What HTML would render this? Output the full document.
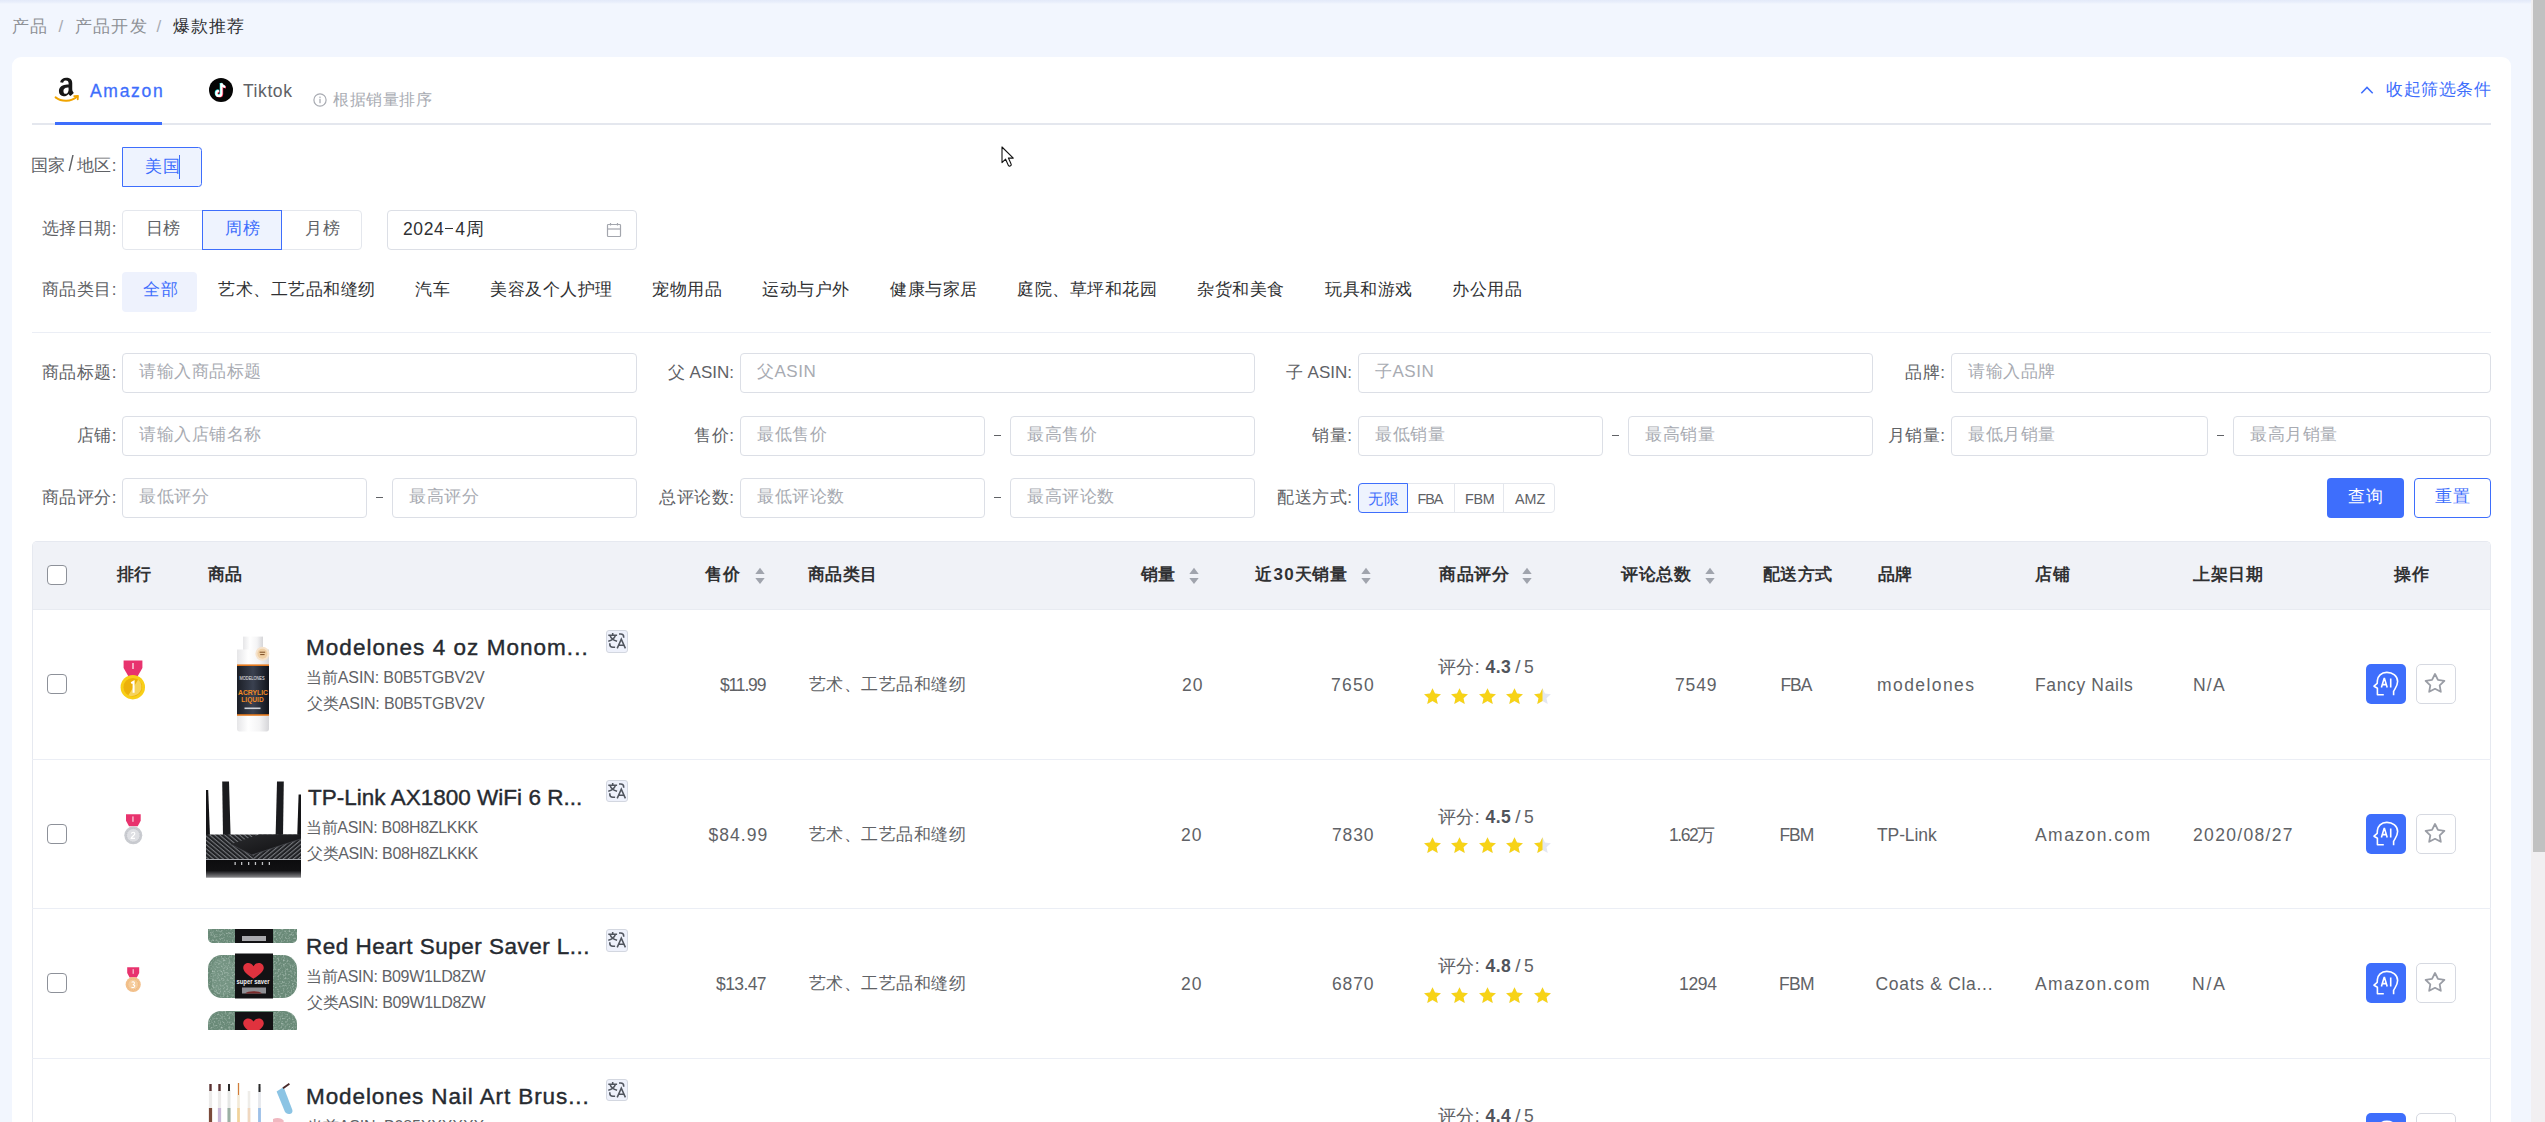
<!DOCTYPE html>
<html><head><meta charset="utf-8"><title>爆款推荐</title>
<style>
html,body{margin:0;padding:0;}
body{width:2545px;height:1122px;overflow:hidden;position:relative;background:#f2f6fe;font-family:"Liberation Sans",sans-serif;}
.t{position:absolute;white-space:nowrap;}
.b{position:absolute;box-sizing:border-box;}
svg{position:absolute;overflow:visible;}
</style></head><body>

<div class="b" style="left:0px;top:0px;width:2531px;height:4px;background:linear-gradient(rgba(40,80,190,0.075),rgba(40,80,190,0.045) 55%,rgba(40,80,190,0));"></div>
<div class="t" style="left:12px;top:12.30px;font-size:17px;line-height:30px;color:#8e9196;letter-spacing:1.200px;">产品</div>
<div class="t" style="left:58.5px;top:12.30px;font-size:17px;line-height:30px;color:#a8abb2;letter-spacing:0.500px;">/</div>
<div class="t" style="left:75px;top:12.30px;font-size:17px;line-height:30px;color:#8e9196;letter-spacing:1.200px;">产品开发</div>
<div class="t" style="left:156.5px;top:12.30px;font-size:17px;line-height:30px;color:#a8abb2;letter-spacing:0.500px;">/</div>
<div class="t" style="left:172.5px;top:12.30px;font-size:17px;line-height:30px;color:#303133;letter-spacing:1.000px;">爆款推荐</div>
<div class="b" style="left:12px;top:57px;width:2499px;height:1143px;background:#fff;border-radius:9px;"></div>
<div class="b" style="left:32px;top:123px;width:2459px;height:2px;background:#e4e7ee;"></div>
<div class="b" style="left:55px;top:122px;width:107px;height:3px;background:#3e6efc;"></div>
<svg style="left:55px;top:77px" width="25" height="27" viewBox="0 0 25 27">
<path transform="matrix(1.17 0 0 1.25 -1.95 -3.2)" d="M11.2 3.2c-2.6 0-4.6 1.2-5.2 3.6l2.6.3c.3-1.2 1.2-1.7 2.4-1.7 1.6 0 2.3.9 2.3 2.3v.8c-1.6 0-3.6.1-5.1.8C6.5 10 5 11.4 5 13.8c0 2.7 1.8 4.1 4 4.1 1.9 0 3.1-.5 4.3-1.8.4.6.6.9 1.3 1.5.2.1.4.1.6 0l2.3-2c.2-.2.2-.4 0-.6-.6-.8-1.1-1.4-1.1-2.8V7.6c0-2.2-.9-4.4-5.2-4.4zm2.1 8.6c0 1.1 0 2-.6 2.9-.4.8-1.2 1.3-2 1.3-1.1 0-1.8-.9-1.8-2.1 0-2.4 2.2-2.9 4.3-2.9v.8z" fill="#161616"/>
<path d="M0.6 20.4c6 4.6 15.4 4.6 21.4-0.6" stroke="#f0a400" stroke-width="2" fill="none" stroke-linecap="round"/>
<path d="M19.2 19.2l3.8-.4-.3 3.6" stroke="#f0a400" stroke-width="1.8" fill="none" stroke-linecap="round" stroke-linejoin="round"/>
</svg>
<div class="t" style="left:90.0px;top:76.00px;font-size:17.5px;line-height:30px;color:#3e6efc;letter-spacing:1.700px;-webkit-text-stroke:0.3px #3e6efc;">Amazon</div>
<svg style="left:209px;top:78px" width="24" height="24" viewBox="0 0 24 24">
<circle cx="12" cy="12" r="12" fill="#050505"/>
<g transform="translate(0.7,0.6)"><path d="M12.4 5.4v10a2.5 2.5 0 1 1-2.5-2.5" stroke="#ff2d55" stroke-width="2.2" fill="none"/><path d="M12.4 5.5c.4 2 1.8 3.2 3.9 3.3" stroke="#ff2d55" stroke-width="2.2" fill="none"/></g>
<g transform="translate(-0.6,-0.5)"><path d="M12.4 5.4v10a2.5 2.5 0 1 1-2.5-2.5" stroke="#25f4ee" stroke-width="2.2" fill="none"/><path d="M12.4 5.5c.4 2 1.8 3.2 3.9 3.3" stroke="#25f4ee" stroke-width="2.2" fill="none"/></g>
<path d="M12.4 5.4v10a2.5 2.5 0 1 1-2.5-2.5" stroke="#fff" stroke-width="2.2" fill="none"/><path d="M12.4 5.5c.4 2 1.8 3.2 3.9 3.3" stroke="#fff" stroke-width="2.2" fill="none"/>
</svg>
<div class="t" style="left:243.0px;top:76.00px;font-size:17.5px;line-height:30px;color:#606266;letter-spacing:0.580px;">Tiktok</div>
<svg style="left:313px;top:93px" width="14" height="14" viewBox="0 0 14 14">
<circle cx="7" cy="7" r="6.1" stroke="#a8abb2" stroke-width="1.2" fill="none"/>
<rect x="6.35" y="5.8" width="1.3" height="4.4" fill="#a8abb2"/><rect x="6.35" y="3.6" width="1.3" height="1.3" fill="#a8abb2"/>
</svg>
<div class="t" style="left:333px;top:85.00px;font-size:16px;line-height:30px;color:#a8abb2;letter-spacing:0.500px;">根据销量排序</div>
<svg style="left:2360px;top:85px" width="14" height="10" viewBox="0 0 14 10">
<path d="M1.3 8.3L7 2.4l5.7 5.9" stroke="#3e6efc" stroke-width="1.5" fill="none"/></svg>
<div class="t" style="left:2386px;top:74.50px;font-size:17px;line-height:30px;color:#3e6efc;letter-spacing:0.500px;">收起筛选条件</div>
<div class="t" style="right:2428.0px;top:151.30px;font-size:17px;line-height:30px;color:#606266;letter-spacing:0.500px;">国家<span style="font-size:22px;line-height:10px;margin:0 2.5px 0 2px;display:inline-block;transform:scaleX(0.85)">/</span>地区:</div>
<div class="b" style="left:122px;top:147px;width:80px;height:40px;border:1px solid #3e6efc;background:#eef3fe;border-radius:0 3.5px 3.5px 0;"></div>
<div class="t" style="left:145px;top:151.50px;font-size:17px;line-height:30px;color:#3e6efc;letter-spacing:0.500px;">美国</div>
<div class="b" style="left:179px;top:155px;width:1.1999999999999886px;height:24px;background:#3e6efc;"></div>
<div class="t" style="right:2428.0px;top:214.00px;font-size:17px;line-height:30px;color:#606266;letter-spacing:0.500px;">选择日期:</div>
<div class="b" style="left:122px;top:210px;width:240px;height:40px;border:1px solid #e4e7ed;border-radius:4px;background:#fff;"></div>
<div class="b" style="left:202px;top:210px;width:80px;height:40px;border:1px solid #3e6efc;background:#eef3fe;"></div>
<div class="t" style="left:145.5px;top:214.00px;font-size:17px;line-height:30px;color:#606266;letter-spacing:0.500px;">日榜</div>
<div class="t" style="left:225px;top:214.00px;font-size:17px;line-height:30px;color:#3e6efc;letter-spacing:0.500px;">周榜</div>
<div class="t" style="left:305px;top:214.00px;font-size:17px;line-height:30px;color:#606266;letter-spacing:0.500px;">月榜</div>
<div class="b" style="left:387px;top:210px;width:250px;height:40px;border:1px solid #dcdfe6;border-radius:4px;background:#fff;"></div>
<div class="t" style="left:403px;top:213.70px;font-size:17.5px;line-height:30px;color:#303133;letter-spacing:0.600px;">2024<span style="display:inline-block;width:8px;height:1px;background:#303133;vertical-align:5.5px;margin:0 2px 0 1px"></span>4周</div>
<svg style="left:606px;top:222px" width="16" height="16" viewBox="0 0 16 16">
<rect x="1.5" y="2.5" width="13" height="12" rx="0.8" stroke="#a3a6ad" stroke-width="1.2" fill="none"/>
<path d="M1.5 7h13" stroke="#a3a6ad" stroke-width="1.2"/><path d="M4.5 1v2.5M11.5 1v2.5" stroke="#a3a6ad" stroke-width="1.2"/>
</svg>
<div class="t" style="right:2428.0px;top:274.50px;font-size:17px;line-height:30px;color:#606266;letter-spacing:0.500px;">商品类目:</div>
<div class="b" style="left:122px;top:272px;width:75px;height:40px;background:#eef2fd;border-radius:4px;"></div>
<div class="t" style="left:143px;top:274.50px;font-size:17px;line-height:30px;color:#3e6efc;letter-spacing:0.500px;">全部</div>
<div class="t" style="left:218px;top:274.50px;font-size:17px;line-height:30px;color:#303133;letter-spacing:0.500px;">艺术、工艺品和缝纫</div>
<div class="t" style="left:415px;top:274.50px;font-size:17px;line-height:30px;color:#303133;letter-spacing:0.500px;">汽车</div>
<div class="t" style="left:490px;top:274.50px;font-size:17px;line-height:30px;color:#303133;letter-spacing:0.500px;">美容及个人护理</div>
<div class="t" style="left:652px;top:274.50px;font-size:17px;line-height:30px;color:#303133;letter-spacing:0.500px;">宠物用品</div>
<div class="t" style="left:762px;top:274.50px;font-size:17px;line-height:30px;color:#303133;letter-spacing:0.500px;">运动与户外</div>
<div class="t" style="left:890px;top:274.50px;font-size:17px;line-height:30px;color:#303133;letter-spacing:0.500px;">健康与家居</div>
<div class="t" style="left:1017px;top:274.50px;font-size:17px;line-height:30px;color:#303133;letter-spacing:0.500px;">庭院、草坪和花园</div>
<div class="t" style="left:1197px;top:274.50px;font-size:17px;line-height:30px;color:#303133;letter-spacing:0.500px;">杂货和美食</div>
<div class="t" style="left:1325px;top:274.50px;font-size:17px;line-height:30px;color:#303133;letter-spacing:0.500px;">玩具和游戏</div>
<div class="t" style="left:1452px;top:274.50px;font-size:17px;line-height:30px;color:#303133;letter-spacing:0.500px;">办公用品</div>
<div class="b" style="left:32px;top:332px;width:2459px;height:1px;background:#ebeef5;"></div>
<div class="t" style="right:2428.0px;top:358.30px;font-size:17px;line-height:30px;color:#606266;letter-spacing:0.500px;">商品标题:</div>
<div class="b" style="left:122px;top:353px;width:515px;height:40px;border:1px solid #dcdfe6;border-radius:4px;background:#fff;"></div>
<div class="t" style="left:139px;top:357.20px;font-size:17px;line-height:30px;color:#a8abb2;letter-spacing:0.500px;">请输入商品标题</div>
<div class="t" style="right:1811.0px;top:358.30px;font-size:17px;line-height:30px;color:#606266;">父 ASIN:</div>
<div class="b" style="left:740px;top:353px;width:515px;height:40px;border:1px solid #dcdfe6;border-radius:4px;background:#fff;"></div>
<div class="t" style="left:757px;top:357.20px;font-size:17px;line-height:30px;color:#a8abb2;letter-spacing:0.500px;">父ASIN</div>
<div class="t" style="right:1193.0px;top:358.30px;font-size:17px;line-height:30px;color:#606266;">子 ASIN:</div>
<div class="b" style="left:1358px;top:353px;width:515px;height:40px;border:1px solid #dcdfe6;border-radius:4px;background:#fff;"></div>
<div class="t" style="left:1375px;top:357.20px;font-size:17px;line-height:30px;color:#a8abb2;letter-spacing:0.500px;">子ASIN</div>
<div class="t" style="right:599.5px;top:358.30px;font-size:17px;line-height:30px;color:#606266;letter-spacing:0.500px;">品牌:</div>
<div class="b" style="left:1951px;top:353px;width:540px;height:40px;border:1px solid #dcdfe6;border-radius:4px;background:#fff;"></div>
<div class="t" style="left:1968px;top:357.20px;font-size:17px;line-height:30px;color:#a8abb2;letter-spacing:0.500px;">请输入品牌</div>
<div class="t" style="right:2428.0px;top:420.90px;font-size:17px;line-height:30px;color:#606266;letter-spacing:0.500px;">店铺:</div>
<div class="b" style="left:122px;top:416px;width:515px;height:40px;border:1px solid #dcdfe6;border-radius:4px;background:#fff;"></div>
<div class="t" style="left:139px;top:420.20px;font-size:17px;line-height:30px;color:#a8abb2;letter-spacing:0.500px;">请输入店铺名称</div>
<div class="t" style="right:1810.5px;top:420.90px;font-size:17px;line-height:30px;color:#606266;letter-spacing:0.500px;">售价:</div>
<div class="b" style="left:740px;top:416px;width:245px;height:40px;border:1px solid #dcdfe6;border-radius:4px;background:#fff;"></div>
<div class="t" style="left:757px;top:420.20px;font-size:17px;line-height:30px;color:#a8abb2;letter-spacing:0.500px;">最低售价</div>
<div class="b" style="left:993.5px;top:434.9px;width:7.0px;height:1.0px;background:#606266;"></div>
<div class="b" style="left:1010px;top:416px;width:245px;height:40px;border:1px solid #dcdfe6;border-radius:4px;background:#fff;"></div>
<div class="t" style="left:1027px;top:420.20px;font-size:17px;line-height:30px;color:#a8abb2;letter-spacing:0.500px;">最高售价</div>
<div class="t" style="right:1192.5px;top:420.90px;font-size:17px;line-height:30px;color:#606266;letter-spacing:0.500px;">销量:</div>
<div class="b" style="left:1358px;top:416px;width:245px;height:40px;border:1px solid #dcdfe6;border-radius:4px;background:#fff;"></div>
<div class="t" style="left:1375px;top:420.20px;font-size:17px;line-height:30px;color:#a8abb2;letter-spacing:0.500px;">最低销量</div>
<div class="b" style="left:1611.5px;top:434.9px;width:7.0px;height:1.0px;background:#606266;"></div>
<div class="b" style="left:1628px;top:416px;width:245px;height:40px;border:1px solid #dcdfe6;border-radius:4px;background:#fff;"></div>
<div class="t" style="left:1645px;top:420.20px;font-size:17px;line-height:30px;color:#a8abb2;letter-spacing:0.500px;">最高销量</div>
<div class="t" style="right:599.5px;top:420.90px;font-size:17px;line-height:30px;color:#606266;letter-spacing:0.500px;">月销量:</div>
<div class="b" style="left:1951px;top:416px;width:257px;height:40px;border:1px solid #dcdfe6;border-radius:4px;background:#fff;"></div>
<div class="t" style="left:1968px;top:420.20px;font-size:17px;line-height:30px;color:#a8abb2;letter-spacing:0.500px;">最低月销量</div>
<div class="b" style="left:2216.5px;top:434.9px;width:7.0px;height:1.0px;background:#606266;"></div>
<div class="b" style="left:2233px;top:416px;width:258px;height:40px;border:1px solid #dcdfe6;border-radius:4px;background:#fff;"></div>
<div class="t" style="left:2250px;top:420.20px;font-size:17px;line-height:30px;color:#a8abb2;letter-spacing:0.500px;">最高月销量</div>
<div class="t" style="right:2428.0px;top:482.50px;font-size:17px;line-height:30px;color:#606266;letter-spacing:0.500px;">商品评分:</div>
<div class="b" style="left:122px;top:478px;width:245px;height:40px;border:1px solid #dcdfe6;border-radius:4px;background:#fff;"></div>
<div class="t" style="left:139px;top:482.20px;font-size:17px;line-height:30px;color:#a8abb2;letter-spacing:0.500px;">最低评分</div>
<div class="b" style="left:375.5px;top:496.5px;width:7.0px;height:1.0px;background:#606266;"></div>
<div class="b" style="left:392px;top:478px;width:245px;height:40px;border:1px solid #dcdfe6;border-radius:4px;background:#fff;"></div>
<div class="t" style="left:409px;top:482.20px;font-size:17px;line-height:30px;color:#a8abb2;letter-spacing:0.500px;">最高评分</div>
<div class="t" style="right:1810.5px;top:482.50px;font-size:17px;line-height:30px;color:#606266;letter-spacing:0.500px;">总评论数:</div>
<div class="b" style="left:740px;top:478px;width:245px;height:40px;border:1px solid #dcdfe6;border-radius:4px;background:#fff;"></div>
<div class="t" style="left:757px;top:482.20px;font-size:17px;line-height:30px;color:#a8abb2;letter-spacing:0.500px;">最低评论数</div>
<div class="b" style="left:993.5px;top:496.5px;width:7.0px;height:1.0px;background:#606266;"></div>
<div class="b" style="left:1010px;top:478px;width:245px;height:40px;border:1px solid #dcdfe6;border-radius:4px;background:#fff;"></div>
<div class="t" style="left:1027px;top:482.20px;font-size:17px;line-height:30px;color:#a8abb2;letter-spacing:0.500px;">最高评论数</div>
<div class="t" style="right:1192.5px;top:482.50px;font-size:17px;line-height:30px;color:#606266;letter-spacing:0.500px;">配送方式:</div>
<div class="b" style="left:1358px;top:483px;width:197px;height:30px;border:1px solid #e4e7ed;border-radius:4px;background:#fff;"></div>
<div class="b" style="left:1454px;top:483px;width:1px;height:30px;background:#e4e7ed;"></div>
<div class="b" style="left:1503px;top:483px;width:1px;height:30px;background:#e4e7ed;"></div>
<div class="b" style="left:1358px;top:483px;width:50px;height:30px;border:1px solid #3e6efc;background:#eef3fe;border-radius:4px 0 0 4px;"></div>
<div class="t" style="left:1368px;top:484.00px;font-size:15px;line-height:30px;color:#3e6efc;letter-spacing:0.500px;">无限</div>
<div class="t" style="left:1417.5px;top:484.00px;font-size:14.3px;line-height:30px;color:#606266;letter-spacing:-1.000px;">FBA</div>
<div class="t" style="left:1465.0px;top:484.00px;font-size:14.3px;line-height:30px;color:#606266;letter-spacing:-0.300px;">FBM</div>
<div class="t" style="left:1515.0px;top:484.00px;font-size:14.3px;line-height:30px;color:#606266;">AMZ</div>
<div class="b" style="left:2327px;top:478px;width:77px;height:40px;background:#3e6efc;border-radius:4px;"></div>
<div class="t" style="left:2065.5px;width:600px;text-align:center;top:481.50px;font-size:17px;line-height:30px;color:#fff;letter-spacing:0.500px;">查询</div>
<div class="b" style="left:2414px;top:478px;width:77px;height:40px;border:1px solid #3e6efc;border-radius:4px;background:#fff;"></div>
<div class="t" style="left:2152.5px;width:600px;text-align:center;top:481.50px;font-size:17px;line-height:30px;color:#3e6efc;letter-spacing:0.500px;">重置</div>
<div class="b" style="left:32px;top:541px;width:2459px;height:659px;border:1px solid #e6e9f0;border-bottom:none;border-radius:5px 5px 0 0;background:#fff;"></div>
<div class="b" style="left:33px;top:542px;width:2457px;height:67px;background:#f0f2f7;border-radius:4px 4px 0 0;"></div>
<div class="b" style="left:33px;top:609px;width:2457px;height:1px;background:#e8ebf1;"></div>
<div class="b" style="left:47px;top:565px;width:20px;height:20px;border:1px solid #8d9199;border-radius:4px;background:#fff;"></div>
<div class="t" style="left:116.5px;top:559.50px;font-size:17px;line-height:30px;color:#303133;font-weight:700;letter-spacing:0.500px;">排行</div>
<div class="t" style="left:207.5px;top:559.50px;font-size:17px;line-height:30px;color:#303133;font-weight:700;letter-spacing:0.500px;">商品</div>
<div class="t" style="left:705px;top:559.50px;font-size:17px;line-height:30px;color:#303133;font-weight:700;letter-spacing:0.500px;">售价</div>
<svg style="left:754.5px;top:565.5px" width="10" height="20" viewBox="0 0 10 20">
<path d="M5 1.8L9.7 8H0.3z" fill="#a0a4ad"/><path d="M5 18L9.7 12H0.3z" fill="#a0a4ad"/></svg>
<div class="t" style="left:807.5px;top:559.50px;font-size:17px;line-height:30px;color:#303133;font-weight:700;letter-spacing:0.500px;">商品类目</div>
<div class="t" style="left:1140.5px;top:559.50px;font-size:17px;line-height:30px;color:#303133;font-weight:700;letter-spacing:0.500px;">销量</div>
<svg style="left:1188.5px;top:565.5px" width="10" height="20" viewBox="0 0 10 20">
<path d="M5 1.8L9.7 8H0.3z" fill="#a0a4ad"/><path d="M5 18L9.7 12H0.3z" fill="#a0a4ad"/></svg>
<div class="t" style="left:1255px;top:560.00px;font-size:17px;line-height:30px;color:#303133;font-weight:700;letter-spacing:0.500px;">近<span style="letter-spacing:1.2px;margin-left:1px">30</span>天销量</div>
<svg style="left:1361px;top:565.5px" width="10" height="20" viewBox="0 0 10 20">
<path d="M5 1.8L9.7 8H0.3z" fill="#a0a4ad"/><path d="M5 18L9.7 12H0.3z" fill="#a0a4ad"/></svg>
<div class="t" style="left:1439px;top:559.50px;font-size:17px;line-height:30px;color:#303133;font-weight:700;letter-spacing:0.500px;">商品评分</div>
<svg style="left:1522px;top:565.5px" width="10" height="20" viewBox="0 0 10 20">
<path d="M5 1.8L9.7 8H0.3z" fill="#a0a4ad"/><path d="M5 18L9.7 12H0.3z" fill="#a0a4ad"/></svg>
<div class="t" style="left:1621px;top:559.50px;font-size:17px;line-height:30px;color:#303133;font-weight:700;letter-spacing:0.500px;">评论总数</div>
<svg style="left:1704.5px;top:565.5px" width="10" height="20" viewBox="0 0 10 20">
<path d="M5 1.8L9.7 8H0.3z" fill="#a0a4ad"/><path d="M5 18L9.7 12H0.3z" fill="#a0a4ad"/></svg>
<div class="t" style="left:1762.5px;top:559.50px;font-size:17px;line-height:30px;color:#303133;font-weight:700;letter-spacing:0.500px;">配送方式</div>
<div class="t" style="left:1877.5px;top:559.50px;font-size:17px;line-height:30px;color:#303133;font-weight:700;letter-spacing:0.500px;">品牌</div>
<div class="t" style="left:2035px;top:559.50px;font-size:17px;line-height:30px;color:#303133;font-weight:700;letter-spacing:0.500px;">店铺</div>
<div class="t" style="left:2193px;top:559.50px;font-size:17px;line-height:30px;color:#303133;font-weight:700;letter-spacing:0.500px;">上架日期</div>
<div class="t" style="left:2394px;top:559.50px;font-size:17px;line-height:30px;color:#303133;font-weight:700;letter-spacing:0.500px;">操作</div>
<div class="b" style="left:32px;top:758.5px;width:2459px;height:1.0px;background:#ebeef5;"></div>
<div class="b" style="left:47px;top:674px;width:20px;height:20px;border:1px solid #8d9199;border-radius:4px;background:#fff;"></div>
<svg style="left:119px;top:660px" width="28" height="40" viewBox="0 0 28 40">
<path d="M4.6 0.6h18.8v7.4l-4.6 8H9.2l-4.6-8z" fill="#e8336e"/>
<rect x="13.2" y="3" width="1.6" height="6" fill="#f7c9d6"/>
<circle cx="13.8" cy="27.2" r="12.2" fill="#f8cf17"/>
<circle cx="13.8" cy="27.2" r="9.3" fill="#ecb10a"/>
<path d="M19.2 19.6a9.3 9.3 0 0 1-9.8 15.6z" fill="#f6d35a"/>
<path d="M12.2 23.2l2.4-1.4v11" stroke="#fff" stroke-width="2" fill="none"/>
</svg>
<svg style="left:206px;top:636px" width="95" height="96" viewBox="0 0 95 96">
<defs><linearGradient id="bw" x1="0" x2="1"><stop offset="0" stop-color="#e6e6e8"/><stop offset="0.35" stop-color="#ffffff"/><stop offset="0.7" stop-color="#f4f4f5"/><stop offset="1" stop-color="#d6d6d9"/></linearGradient>
<linearGradient id="bl" x1="0" x2="1"><stop offset="0" stop-color="#1b1e26"/><stop offset="0.5" stop-color="#3a4150"/><stop offset="1" stop-color="#10131a"/></linearGradient></defs>
<rect x="37" y="0.6" width="20" height="14" fill="url(#bw)"/>
<path d="M31 13.5h32v79.5c0 1.6-1 2.4-2.4 2.4H33.4C32 95.4 31 94.6 31 93z" fill="url(#bw)"/>
<rect x="31" y="29" width="32" height="50" fill="url(#bl)"/>
<rect x="31" y="28.4" width="32" height="1.6" fill="#e57a1e"/><rect x="31" y="78.2" width="32" height="1.6" fill="#e57a1e"/>
<circle cx="56.4" cy="17.8" r="7" fill="#f6e3cc"/><circle cx="56.4" cy="17.8" r="5" fill="#efcfa4"/><path d="M53.6 16.2h5.6M54.2 18.6h4.4" stroke="#7a4a20" stroke-width="1"/>
<text x="33.5" y="44.4" font-family="Liberation Sans" font-size="4.6" fill="#eeeeee" textLength="25" lengthAdjust="spacingAndGlyphs">MODELONES</text>
<text x="32" y="59.2" font-family="Liberation Sans" font-weight="700" font-size="6.6" fill="#f08a25" textLength="30" lengthAdjust="spacingAndGlyphs">ACRYLIC</text>
<text x="46.5" y="65.6" font-family="Liberation Sans" font-weight="700" font-size="6.6" fill="#f08a25" text-anchor="middle">LIQUID</text>
<rect x="38.5" y="71.5" width="16" height="1.6" fill="#cfd2d8"/>
</svg>
<div class="t" style="left:306.0px;top:633.00px;font-size:22.5px;line-height:30px;color:#262a30;letter-spacing:1.037px;-webkit-text-stroke:0.4px #262a30;">Modelones 4 oz Monom...</div>
<div class="b" style="left:605.5px;top:630.0px;width:22px;height:22.5px;border:1px solid #d3d7e0;border-radius:3px;background:#eef1fb;"></div>
<svg style="left:605.5px;top:630.0px" width="22" height="22" viewBox="0 0 22 22">
<g stroke="#50555e" stroke-width="1.55" fill="none">
<path d="M2.3 5.3h8.8M6.7 2.9v2.4"/>
<path d="M3.9 5.3c1.2 3.4 3.6 5.2 7.2 6M9.5 5.3c-1.2 3.4-3.6 5.2-7.2 6"/>
<path d="M13 3.9h1.7c1.9 0 3 1.1 3 3v0.9"/>
<path d="M3.8 13.3v0.9c0 1.9 1.1 3 3 3h2.3"/>
<path d="M11.2 18.4l4.1-9.2 4.1 9.2M12.6 15.3h5.4"/>
</g></svg>
<div class="t" style="left:306.0px;top:663.00px;font-size:16px;line-height:30px;color:#606266;letter-spacing:-0.110px;">当前ASIN: B0B5TGBV2V</div>
<div class="t" style="left:307.0px;top:689.00px;font-size:16px;line-height:30px;color:#606266;letter-spacing:-0.169px;">父类ASIN: B0B5TGBV2V</div>
<div class="t" style="left:720.0px;top:670.00px;font-size:17.5px;line-height:30px;color:#606266;letter-spacing:-1.160px;">$11.99</div>
<div class="t" style="left:808.5px;top:670.00px;font-size:17px;line-height:30px;color:#606266;letter-spacing:0.500px;">艺术、工艺品和缝纫</div>
<div class="t" style="left:1182.0px;top:670.00px;font-size:17.5px;line-height:30px;color:#606266;letter-spacing:1.000px;">20</div>
<div class="t" style="left:1331.0px;top:670.00px;font-size:17.5px;line-height:30px;color:#606266;letter-spacing:1.272px;">7650</div>
<div class="t" style="left:1675.0px;top:670.00px;font-size:17.5px;line-height:30px;color:#606266;letter-spacing:0.870px;">7549</div>
<div class="t" style="left:1780.5px;top:670.00px;font-size:17.5px;line-height:30px;color:#606266;letter-spacing:-1.100px;">FBA</div>
<div class="t" style="left:1877.0px;top:670.00px;font-size:17.5px;line-height:30px;color:#606266;letter-spacing:1.425px;">modelones</div>
<div class="t" style="left:2035.0px;top:670.00px;font-size:17.5px;line-height:30px;color:#606266;letter-spacing:0.640px;">Fancy Nails</div>
<div class="t" style="left:2193.0px;top:670.00px;font-size:17.5px;line-height:30px;color:#606266;letter-spacing:1.200px;">N/A</div>
<div class="t" style="left:1286px;width:400px;text-align:center;top:652px;font-size:17.5px;line-height:30px;letter-spacing:0.5px;color:#606266;">评分: <b style="color:#50545c">4.3</b><span style="font-size:19px;margin:0 3px 0 4px">/</span>5</div>
<svg style="left:1423.5px;top:687.5px" width="17" height="16" viewBox="0 0 17 16">
<defs><clipPath id="c0_0"><rect x="0" y="0" width="17" height="16"/></clipPath></defs>
<path d="M8.5 0.2L10.97 5.6L16.9 6.25L12.49 10.25L13.73 16L8.5 13.1L3.27 16L4.51 10.25L0.1 6.25L6.03 5.6Z" fill="#e3e7f1"/>
<path d="M8.5 0.2L10.97 5.6L16.9 6.25L12.49 10.25L13.73 16L8.5 13.1L3.27 16L4.51 10.25L0.1 6.25L6.03 5.6Z" fill="#f7d317" clip-path="url(#c0_0)"/></svg>
<svg style="left:1451.0px;top:687.5px" width="17" height="16" viewBox="0 0 17 16">
<defs><clipPath id="c0_1"><rect x="0" y="0" width="17" height="16"/></clipPath></defs>
<path d="M8.5 0.2L10.97 5.6L16.9 6.25L12.49 10.25L13.73 16L8.5 13.1L3.27 16L4.51 10.25L0.1 6.25L6.03 5.6Z" fill="#e3e7f1"/>
<path d="M8.5 0.2L10.97 5.6L16.9 6.25L12.49 10.25L13.73 16L8.5 13.1L3.27 16L4.51 10.25L0.1 6.25L6.03 5.6Z" fill="#f7d317" clip-path="url(#c0_1)"/></svg>
<svg style="left:1478.5px;top:687.5px" width="17" height="16" viewBox="0 0 17 16">
<defs><clipPath id="c0_2"><rect x="0" y="0" width="17" height="16"/></clipPath></defs>
<path d="M8.5 0.2L10.97 5.6L16.9 6.25L12.49 10.25L13.73 16L8.5 13.1L3.27 16L4.51 10.25L0.1 6.25L6.03 5.6Z" fill="#e3e7f1"/>
<path d="M8.5 0.2L10.97 5.6L16.9 6.25L12.49 10.25L13.73 16L8.5 13.1L3.27 16L4.51 10.25L0.1 6.25L6.03 5.6Z" fill="#f7d317" clip-path="url(#c0_2)"/></svg>
<svg style="left:1506.0px;top:687.5px" width="17" height="16" viewBox="0 0 17 16">
<defs><clipPath id="c0_3"><rect x="0" y="0" width="17" height="16"/></clipPath></defs>
<path d="M8.5 0.2L10.97 5.6L16.9 6.25L12.49 10.25L13.73 16L8.5 13.1L3.27 16L4.51 10.25L0.1 6.25L6.03 5.6Z" fill="#e3e7f1"/>
<path d="M8.5 0.2L10.97 5.6L16.9 6.25L12.49 10.25L13.73 16L8.5 13.1L3.27 16L4.51 10.25L0.1 6.25L6.03 5.6Z" fill="#f7d317" clip-path="url(#c0_3)"/></svg>
<svg style="left:1533.5px;top:687.5px" width="17" height="16" viewBox="0 0 17 16">
<defs><clipPath id="c0_4"><rect x="0" y="0" width="8.5" height="16"/></clipPath></defs>
<path d="M8.5 0.2L10.97 5.6L16.9 6.25L12.49 10.25L13.73 16L8.5 13.1L3.27 16L4.51 10.25L0.1 6.25L6.03 5.6Z" fill="#e3e7f1"/>
<path d="M8.5 0.2L10.97 5.6L16.9 6.25L12.49 10.25L13.73 16L8.5 13.1L3.27 16L4.51 10.25L0.1 6.25L6.03 5.6Z" fill="#f7d317" clip-path="url(#c0_4)"/></svg>
<div class="b" style="left:2366px;top:664px;width:40px;height:40px;background:#3e6efc;border-radius:5px;"></div>
<svg style="left:2366px;top:664px" width="40" height="40" viewBox="0 0 40 40">
<path d="M27.6 31.2V27.4C28.6 25 31.6 22.4 31.6 17.6C31.6 12.2 26.8 8.4 20.8 8.4C15 8.4 11.8 12.2 11.4 16.4L11.2 19.4L8 22.2L11.4 24.2V30.8H17.8" stroke="#fff" stroke-width="1.6" fill="none" stroke-linejoin="round"/>
<path d="M15.4 23.4L18.1 14.6h0.4L21.2 23.4M16.3 20.6h4M24.7 14.6v8.8" stroke="#fff" stroke-width="1.6" fill="none"/>
</svg>
<div class="b" style="left:2416px;top:664px;width:40px;height:40px;border:1px solid #d6d9e1;border-radius:5px;background:#fff;"></div>
<svg style="left:2416px;top:664px" width="40" height="40" viewBox="0 0 40 40">
<path d="M19 10L21.94 15.9L28.4 16.8L23.7 21.35L24.8 27.8L19 24.8L13.2 27.8L14.3 21.35L9.6 16.8L16.06 15.9Z" stroke="#9a9da5" stroke-width="1.8" fill="none" stroke-linejoin="round"/>
</svg>
<div class="b" style="left:32px;top:908.0px;width:2459px;height:1.0px;background:#ebeef5;"></div>
<div class="b" style="left:47px;top:823.5px;width:20px;height:20.0px;border:1px solid #8d9199;border-radius:4px;background:#fff;"></div>
<svg style="left:122px;top:813.5px" width="22" height="32" viewBox="0 0 22 32">
<path d="M4 0.3h14.7v6.4l-3 5.6H7l-3-5.6z" fill="#e8336e"/>
<rect x="10.3" y="2.4" width="1.3" height="5.4" fill="#f7c9d6"/>
<circle cx="11.3" cy="21.3" r="9" fill="#c9cbd0"/>
<circle cx="11.3" cy="21.3" r="6.6" fill="#dedfe3" stroke="#b4b7bd" stroke-width="0.6" stroke-dasharray="1 1"/>
<path d="M9.4 19.6c.4-1.8 3.4-1.8 3.4.2 0 1.4-3.4 3.3-3.6 4.5h3.8" stroke="#fff" stroke-width="1.2" fill="none"/>
</svg>
<svg style="left:206px;top:780.5px" width="95" height="98" viewBox="0 0 95 98">
<defs><pattern id="rsl" width="3.2" height="3.2" patternUnits="userSpaceOnUse" patternTransform="rotate(130)"><rect width="3.2" height="3.2" fill="#1f2023"/><rect width="1.1" height="3.2" fill="#74767b"/></pattern>
<pattern id="rsr" width="3.2" height="3.2" patternUnits="userSpaceOnUse" patternTransform="rotate(50)"><rect width="3.2" height="3.2" fill="#1f2023"/><rect width="1.1" height="3.2" fill="#74767b"/></pattern>
<linearGradient id="rb" x1="0" y1="0" x2="0" y2="1"><stop offset="0" stop-color="#0c0c0e"/><stop offset="0.62" stop-color="#111113"/><stop offset="1" stop-color="#8a8a8d"/></linearGradient>
<linearGradient id="rp" x1="0" y1="0" x2="1" y2="1"><stop offset="0" stop-color="#2a2b2e"/><stop offset="1" stop-color="#0f0f11"/></linearGradient></defs>
<path d="M0 9h2.2l1.8 46H0z" fill="#141416"/>
<path d="M16.2 0.6h6.8l1.6 54.6h-7.6z" fill="#1a1b1e"/>
<path d="M71 0.6h6.8l-0.8 54.6h-7.4z" fill="#1a1b1e"/>
<path d="M92.6 13.4h2.4v42h-3.8z" fill="#141416"/>
<rect x="0" y="53.5" width="48" height="25" fill="url(#rsl)"/>
<rect x="47.5" y="53.5" width="47.5" height="25" fill="url(#rsr)"/>
<path d="M24.8 63.3L53 53.5H95v4.4L45.7 74z" fill="url(#rp)"/>
<path d="M24.8 63.3L45.7 74L95 57.9" stroke="#4a4c51" stroke-width="0.7" fill="none"/>
<rect x="0" y="78.3" width="95" height="18.4" fill="url(#rb)"/>
<rect x="0" y="78" width="95" height="1" fill="#a3a5aa"/>
<g fill="#c0c1c4"><rect x="28.5" y="81" width="1.3" height="3"/><rect x="35" y="81" width="1.3" height="3"/><rect x="42" y="81" width="1.3" height="3"/><rect x="48.8" y="81" width="1.3" height="3"/><rect x="55.8" y="81" width="1.3" height="3"/><rect x="62.7" y="81" width="1.3" height="3"/></g>
</svg>
<div class="t" style="left:308.0px;top:782.50px;font-size:22.5px;line-height:30px;color:#262a30;letter-spacing:0.016px;-webkit-text-stroke:0.4px #262a30;">TP-Link AX1800 WiFi 6 R...</div>
<div class="b" style="left:605.5px;top:779.5px;width:22px;height:22.5px;border:1px solid #d3d7e0;border-radius:3px;background:#eef1fb;"></div>
<svg style="left:605.5px;top:779.5px" width="22" height="22" viewBox="0 0 22 22">
<g stroke="#50555e" stroke-width="1.55" fill="none">
<path d="M2.3 5.3h8.8M6.7 2.9v2.4"/>
<path d="M3.9 5.3c1.2 3.4 3.6 5.2 7.2 6M9.5 5.3c-1.2 3.4-3.6 5.2-7.2 6"/>
<path d="M13 3.9h1.7c1.9 0 3 1.1 3 3v0.9"/>
<path d="M3.8 13.3v0.9c0 1.9 1.1 3 3 3h2.3"/>
<path d="M11.2 18.4l4.1-9.2 4.1 9.2M12.6 15.3h5.4"/>
</g></svg>
<div class="t" style="left:306.0px;top:812.50px;font-size:16px;line-height:30px;color:#606266;letter-spacing:-0.334px;">当前ASIN: B08H8ZLKKK</div>
<div class="t" style="left:307.0px;top:838.50px;font-size:16px;line-height:30px;color:#606266;letter-spacing:-0.392px;">父类ASIN: B08H8ZLKKK</div>
<div class="t" style="left:708.5px;top:819.50px;font-size:17.5px;line-height:30px;color:#606266;letter-spacing:1.040px;">$84.99</div>
<div class="t" style="left:808.5px;top:819.50px;font-size:17px;line-height:30px;color:#606266;letter-spacing:0.500px;">艺术、工艺品和缝纫</div>
<div class="t" style="left:1181.0px;top:819.50px;font-size:17.5px;line-height:30px;color:#606266;letter-spacing:1.000px;">20</div>
<div class="t" style="left:1332.0px;top:819.50px;font-size:17.5px;line-height:30px;color:#606266;letter-spacing:0.862px;">7830</div>
<div class="t" style="left:1669.0px;top:819.50px;font-size:17.5px;line-height:30px;color:#606266;letter-spacing:-1.450px;">1.62万</div>
<div class="t" style="left:1779.5px;top:819.50px;font-size:17.5px;line-height:30px;color:#606266;letter-spacing:-1.100px;">FBM</div>
<div class="t" style="left:1877.0px;top:819.50px;font-size:17.5px;line-height:30px;color:#606266;letter-spacing:-0.105px;">TP-Link</div>
<div class="t" style="left:2035.0px;top:819.50px;font-size:17.5px;line-height:30px;color:#606266;letter-spacing:1.444px;">Amazon.com</div>
<div class="t" style="left:2193.0px;top:819.50px;font-size:17.5px;line-height:30px;color:#606266;letter-spacing:1.333px;">2020/08/27</div>
<div class="t" style="left:1286px;width:400px;text-align:center;top:801.5px;font-size:17.5px;line-height:30px;letter-spacing:0.5px;color:#606266;">评分: <b style="color:#50545c">4.5</b><span style="font-size:19px;margin:0 3px 0 4px">/</span>5</div>
<svg style="left:1423.5px;top:837.0px" width="17" height="16" viewBox="0 0 17 16">
<defs><clipPath id="c1_0"><rect x="0" y="0" width="17" height="16"/></clipPath></defs>
<path d="M8.5 0.2L10.97 5.6L16.9 6.25L12.49 10.25L13.73 16L8.5 13.1L3.27 16L4.51 10.25L0.1 6.25L6.03 5.6Z" fill="#e3e7f1"/>
<path d="M8.5 0.2L10.97 5.6L16.9 6.25L12.49 10.25L13.73 16L8.5 13.1L3.27 16L4.51 10.25L0.1 6.25L6.03 5.6Z" fill="#f7d317" clip-path="url(#c1_0)"/></svg>
<svg style="left:1451.0px;top:837.0px" width="17" height="16" viewBox="0 0 17 16">
<defs><clipPath id="c1_1"><rect x="0" y="0" width="17" height="16"/></clipPath></defs>
<path d="M8.5 0.2L10.97 5.6L16.9 6.25L12.49 10.25L13.73 16L8.5 13.1L3.27 16L4.51 10.25L0.1 6.25L6.03 5.6Z" fill="#e3e7f1"/>
<path d="M8.5 0.2L10.97 5.6L16.9 6.25L12.49 10.25L13.73 16L8.5 13.1L3.27 16L4.51 10.25L0.1 6.25L6.03 5.6Z" fill="#f7d317" clip-path="url(#c1_1)"/></svg>
<svg style="left:1478.5px;top:837.0px" width="17" height="16" viewBox="0 0 17 16">
<defs><clipPath id="c1_2"><rect x="0" y="0" width="17" height="16"/></clipPath></defs>
<path d="M8.5 0.2L10.97 5.6L16.9 6.25L12.49 10.25L13.73 16L8.5 13.1L3.27 16L4.51 10.25L0.1 6.25L6.03 5.6Z" fill="#e3e7f1"/>
<path d="M8.5 0.2L10.97 5.6L16.9 6.25L12.49 10.25L13.73 16L8.5 13.1L3.27 16L4.51 10.25L0.1 6.25L6.03 5.6Z" fill="#f7d317" clip-path="url(#c1_2)"/></svg>
<svg style="left:1506.0px;top:837.0px" width="17" height="16" viewBox="0 0 17 16">
<defs><clipPath id="c1_3"><rect x="0" y="0" width="17" height="16"/></clipPath></defs>
<path d="M8.5 0.2L10.97 5.6L16.9 6.25L12.49 10.25L13.73 16L8.5 13.1L3.27 16L4.51 10.25L0.1 6.25L6.03 5.6Z" fill="#e3e7f1"/>
<path d="M8.5 0.2L10.97 5.6L16.9 6.25L12.49 10.25L13.73 16L8.5 13.1L3.27 16L4.51 10.25L0.1 6.25L6.03 5.6Z" fill="#f7d317" clip-path="url(#c1_3)"/></svg>
<svg style="left:1533.5px;top:837.0px" width="17" height="16" viewBox="0 0 17 16">
<defs><clipPath id="c1_4"><rect x="0" y="0" width="8.5" height="16"/></clipPath></defs>
<path d="M8.5 0.2L10.97 5.6L16.9 6.25L12.49 10.25L13.73 16L8.5 13.1L3.27 16L4.51 10.25L0.1 6.25L6.03 5.6Z" fill="#e3e7f1"/>
<path d="M8.5 0.2L10.97 5.6L16.9 6.25L12.49 10.25L13.73 16L8.5 13.1L3.27 16L4.51 10.25L0.1 6.25L6.03 5.6Z" fill="#f7d317" clip-path="url(#c1_4)"/></svg>
<div class="b" style="left:2366px;top:813.5px;width:40px;height:40px;background:#3e6efc;border-radius:5px;"></div>
<svg style="left:2366px;top:813.5px" width="40" height="40" viewBox="0 0 40 40">
<path d="M27.6 31.2V27.4C28.6 25 31.6 22.4 31.6 17.6C31.6 12.2 26.8 8.4 20.8 8.4C15 8.4 11.8 12.2 11.4 16.4L11.2 19.4L8 22.2L11.4 24.2V30.8H17.8" stroke="#fff" stroke-width="1.6" fill="none" stroke-linejoin="round"/>
<path d="M15.4 23.4L18.1 14.6h0.4L21.2 23.4M16.3 20.6h4M24.7 14.6v8.8" stroke="#fff" stroke-width="1.6" fill="none"/>
</svg>
<div class="b" style="left:2416px;top:813.5px;width:40px;height:40px;border:1px solid #d6d9e1;border-radius:5px;background:#fff;"></div>
<svg style="left:2416px;top:813.5px" width="40" height="40" viewBox="0 0 40 40">
<path d="M19 10L21.94 15.9L28.4 16.8L23.7 21.35L24.8 27.8L19 24.8L13.2 27.8L14.3 21.35L9.6 16.8L16.06 15.9Z" stroke="#9a9da5" stroke-width="1.8" fill="none" stroke-linejoin="round"/>
</svg>
<div class="b" style="left:32px;top:1057.5px;width:2459px;height:1.0px;background:#ebeef5;"></div>
<div class="b" style="left:47px;top:973px;width:20px;height:20px;border:1px solid #8d9199;border-radius:4px;background:#fff;"></div>
<svg style="left:123px;top:967px" width="20" height="28" viewBox="0 0 20 28">
<path d="M4.2 0.3h12v5.8l-2.4 4.5H6.6l-2.4-4.5z" fill="#e8336e"/>
<rect x="9.6" y="2.2" width="1.2" height="4.6" fill="#f7c9d6"/>
<circle cx="10.2" cy="17.5" r="7.6" fill="#f2c08b"/>
<circle cx="10.2" cy="17.5" r="5.2" fill="#f5cc9c" stroke="#e0a467" stroke-width="0.5" stroke-dasharray="1 1"/>
<path d="M8.6 15.4c1.6-1.2 3.4-.4 2.6 1.6-.2.4-1 .6-1.4.6 1.8 0 2.4 1.2 1.6 2.4-.6.8-2.4.8-3 0" stroke="#fff" stroke-width="1.1" fill="none"/>
</svg>
<svg style="left:207px;top:929px" width="92" height="101" viewBox="0 0 92 101">
<defs><clipPath id="yc"><rect x="0" y="0" width="92" height="101"/></clipPath>
<filter id="yn" x="0" y="0" width="100%" height="100%"><feTurbulence type="fractalNoise" baseFrequency="0.55" numOctaves="2" seed="7" result="n"/><feColorMatrix in="n" type="matrix" values="0 0 0 0 0.78  0 0 0 0 0.86  0 0 0 0 0.82  0 0 0 2.2 -1.05"/><feComposite in2="SourceGraphic" operator="in"/></filter></defs>
<g clip-path="url(#yc)">
<path d="M1 0h89v9c0 3-2 5-6 5H7c-4 0-6-2-6-5z" fill="#6a8a78"/>
<rect x="28" y="0" width="38" height="14" fill="#121214"/><rect x="35" y="7" width="24" height="5" fill="#a9a9ad"/>
<rect x="1" y="26" width="89" height="43" rx="14" fill="#6a8a78"/>
<rect x="5" y="29" width="22" height="37" rx="9" fill="#7a9887" opacity="0.7"/>
<rect x="28" y="24.5" width="38" height="45" fill="#121214"/>
<path d="M46.5 37.2c-3.2-5.4-11-3.2-10.2 2.4.5 3.6 5.2 6.8 10.2 10.2 5-3.4 9.7-6.6 10.2-10.2.8-5.6-7-7.8-10.2-2.4z" fill="#e0323e"/>
<text x="29.5" y="54.6" font-family="Liberation Sans" font-weight="700" font-size="6.4" fill="#f2f2f2" textLength="33" lengthAdjust="spacingAndGlyphs">super saver</text>
<rect x="35" y="58.5" width="24" height="6" fill="#8f8f94"/><path d="M38 64.5c3-3 14-3 17 0" fill="#7a2a2a"/>
<rect x="1" y="82" width="89" height="30" rx="13" fill="#6a8a78"/>
<rect x="28" y="83" width="38" height="20" fill="#121214"/>
<path d="M46.5 92.6c-3.2-5.4-11-3.2-10.2 2.4.5 3.6 5.2 6.8 10.2 10.2 5-3.4 9.7-6.6 10.2-10.2.8-5.6-7-7.8-10.2-2.4z" fill="#e0323e"/>
<g filter="url(#yn)" opacity="0.55"><path d="M1 0h27v14H7c-4 0-6-2-6-5z"/><path d="M66 0h24v9c0 3-2 5-6 5H66z"/><path d="M15 26h13v43H15A14 14 0 0 1 15 26z"/><path d="M66 26h10a14 14 0 0 1 0 43H66z"/><path d="M14 82h14v20H1V95A13 13 0 0 1 14 82z"/><path d="M66 82h11a13 13 0 0 1 13 13v7H66z"/></g>
</g></svg>
<div class="t" style="left:306.0px;top:932.00px;font-size:22.5px;line-height:30px;color:#262a30;letter-spacing:0.488px;-webkit-text-stroke:0.4px #262a30;">Red Heart Super Saver L...</div>
<div class="b" style="left:605.5px;top:929.0px;width:22px;height:22.5px;border:1px solid #d3d7e0;border-radius:3px;background:#eef1fb;"></div>
<svg style="left:605.5px;top:929.0px" width="22" height="22" viewBox="0 0 22 22">
<g stroke="#50555e" stroke-width="1.55" fill="none">
<path d="M2.3 5.3h8.8M6.7 2.9v2.4"/>
<path d="M3.9 5.3c1.2 3.4 3.6 5.2 7.2 6M9.5 5.3c-1.2 3.4-3.6 5.2-7.2 6"/>
<path d="M13 3.9h1.7c1.9 0 3 1.1 3 3v0.9"/>
<path d="M3.8 13.3v0.9c0 1.9 1.1 3 3 3h2.3"/>
<path d="M11.2 18.4l4.1-9.2 4.1 9.2M12.6 15.3h5.4"/>
</g></svg>
<div class="t" style="left:306.0px;top:962.00px;font-size:16px;line-height:30px;color:#606266;letter-spacing:-0.319px;">当前ASIN: B09W1LD8ZW</div>
<div class="t" style="left:307.0px;top:988.00px;font-size:16px;line-height:30px;color:#606266;letter-spacing:-0.378px;">父类ASIN: B09W1LD8ZW</div>
<div class="t" style="left:716.0px;top:969.00px;font-size:17.5px;line-height:30px;color:#606266;letter-spacing:-0.600px;">$13.47</div>
<div class="t" style="left:808.5px;top:969.00px;font-size:17px;line-height:30px;color:#606266;letter-spacing:0.500px;">艺术、工艺品和缝纫</div>
<div class="t" style="left:1181.0px;top:969.00px;font-size:17.5px;line-height:30px;color:#606266;letter-spacing:1.000px;">20</div>
<div class="t" style="left:1332.0px;top:969.00px;font-size:17.5px;line-height:30px;color:#606266;letter-spacing:0.862px;">6870</div>
<div class="t" style="left:1679.0px;top:969.00px;font-size:17.5px;line-height:30px;color:#606266;letter-spacing:-0.333px;">1294</div>
<div class="t" style="left:1779.0px;top:969.00px;font-size:17.5px;line-height:30px;color:#606266;letter-spacing:-0.700px;">FBM</div>
<div class="t" style="left:1875.5px;top:969.00px;font-size:17.5px;line-height:30px;color:#606266;letter-spacing:0.695px;">Coats &amp; Cla...</div>
<div class="t" style="left:2035.0px;top:969.00px;font-size:17.5px;line-height:30px;color:#606266;letter-spacing:1.391px;">Amazon.com</div>
<div class="t" style="left:2192.0px;top:969.00px;font-size:17.5px;line-height:30px;color:#606266;letter-spacing:1.900px;">N/A</div>
<div class="t" style="left:1286px;width:400px;text-align:center;top:951px;font-size:17.5px;line-height:30px;letter-spacing:0.5px;color:#606266;">评分: <b style="color:#50545c">4.8</b><span style="font-size:19px;margin:0 3px 0 4px">/</span>5</div>
<svg style="left:1423.5px;top:986.5px" width="17" height="16" viewBox="0 0 17 16">
<defs><clipPath id="c2_0"><rect x="0" y="0" width="17" height="16"/></clipPath></defs>
<path d="M8.5 0.2L10.97 5.6L16.9 6.25L12.49 10.25L13.73 16L8.5 13.1L3.27 16L4.51 10.25L0.1 6.25L6.03 5.6Z" fill="#e3e7f1"/>
<path d="M8.5 0.2L10.97 5.6L16.9 6.25L12.49 10.25L13.73 16L8.5 13.1L3.27 16L4.51 10.25L0.1 6.25L6.03 5.6Z" fill="#f7d317" clip-path="url(#c2_0)"/></svg>
<svg style="left:1451.0px;top:986.5px" width="17" height="16" viewBox="0 0 17 16">
<defs><clipPath id="c2_1"><rect x="0" y="0" width="17" height="16"/></clipPath></defs>
<path d="M8.5 0.2L10.97 5.6L16.9 6.25L12.49 10.25L13.73 16L8.5 13.1L3.27 16L4.51 10.25L0.1 6.25L6.03 5.6Z" fill="#e3e7f1"/>
<path d="M8.5 0.2L10.97 5.6L16.9 6.25L12.49 10.25L13.73 16L8.5 13.1L3.27 16L4.51 10.25L0.1 6.25L6.03 5.6Z" fill="#f7d317" clip-path="url(#c2_1)"/></svg>
<svg style="left:1478.5px;top:986.5px" width="17" height="16" viewBox="0 0 17 16">
<defs><clipPath id="c2_2"><rect x="0" y="0" width="17" height="16"/></clipPath></defs>
<path d="M8.5 0.2L10.97 5.6L16.9 6.25L12.49 10.25L13.73 16L8.5 13.1L3.27 16L4.51 10.25L0.1 6.25L6.03 5.6Z" fill="#e3e7f1"/>
<path d="M8.5 0.2L10.97 5.6L16.9 6.25L12.49 10.25L13.73 16L8.5 13.1L3.27 16L4.51 10.25L0.1 6.25L6.03 5.6Z" fill="#f7d317" clip-path="url(#c2_2)"/></svg>
<svg style="left:1506.0px;top:986.5px" width="17" height="16" viewBox="0 0 17 16">
<defs><clipPath id="c2_3"><rect x="0" y="0" width="17" height="16"/></clipPath></defs>
<path d="M8.5 0.2L10.97 5.6L16.9 6.25L12.49 10.25L13.73 16L8.5 13.1L3.27 16L4.51 10.25L0.1 6.25L6.03 5.6Z" fill="#e3e7f1"/>
<path d="M8.5 0.2L10.97 5.6L16.9 6.25L12.49 10.25L13.73 16L8.5 13.1L3.27 16L4.51 10.25L0.1 6.25L6.03 5.6Z" fill="#f7d317" clip-path="url(#c2_3)"/></svg>
<svg style="left:1533.5px;top:986.5px" width="17" height="16" viewBox="0 0 17 16">
<defs><clipPath id="c2_4"><rect x="0" y="0" width="17" height="16"/></clipPath></defs>
<path d="M8.5 0.2L10.97 5.6L16.9 6.25L12.49 10.25L13.73 16L8.5 13.1L3.27 16L4.51 10.25L0.1 6.25L6.03 5.6Z" fill="#e3e7f1"/>
<path d="M8.5 0.2L10.97 5.6L16.9 6.25L12.49 10.25L13.73 16L8.5 13.1L3.27 16L4.51 10.25L0.1 6.25L6.03 5.6Z" fill="#f7d317" clip-path="url(#c2_4)"/></svg>
<div class="b" style="left:2366px;top:963px;width:40px;height:40px;background:#3e6efc;border-radius:5px;"></div>
<svg style="left:2366px;top:963px" width="40" height="40" viewBox="0 0 40 40">
<path d="M27.6 31.2V27.4C28.6 25 31.6 22.4 31.6 17.6C31.6 12.2 26.8 8.4 20.8 8.4C15 8.4 11.8 12.2 11.4 16.4L11.2 19.4L8 22.2L11.4 24.2V30.8H17.8" stroke="#fff" stroke-width="1.6" fill="none" stroke-linejoin="round"/>
<path d="M15.4 23.4L18.1 14.6h0.4L21.2 23.4M16.3 20.6h4M24.7 14.6v8.8" stroke="#fff" stroke-width="1.6" fill="none"/>
</svg>
<div class="b" style="left:2416px;top:963px;width:40px;height:40px;border:1px solid #d6d9e1;border-radius:5px;background:#fff;"></div>
<svg style="left:2416px;top:963px" width="40" height="40" viewBox="0 0 40 40">
<path d="M19 10L21.94 15.9L28.4 16.8L23.7 21.35L24.8 27.8L19 24.8L13.2 27.8L14.3 21.35L9.6 16.8L16.06 15.9Z" stroke="#9a9da5" stroke-width="1.8" fill="none" stroke-linejoin="round"/>
</svg>
<svg style="left:207px;top:1082.5px" width="92" height="60" viewBox="0 0 92 60">
<g stroke-linecap="butt">
<path d="M3.5 7v53" stroke="#ecebea" stroke-width="3.2"/><path d="M3.5 1v7" stroke="#5a3030" stroke-width="2.4"/><path d="M3.5 25v35" stroke="#7a4a3a" stroke-width="3.2"/>
<path d="M12.5 7v53" stroke="#ecebea" stroke-width="3.2"/><path d="M12.5 1v7" stroke="#5a3030" stroke-width="2.4"/><path d="M12.5 25v35" stroke="#c9b8d8" stroke-width="3.2"/>
<path d="M22 7v53" stroke="#e6e8e6" stroke-width="3"/><path d="M22 1v7" stroke="#2a2a2a" stroke-width="2"/><path d="M22 25v35" stroke="#9bb0a4" stroke-width="3"/>
<path d="M31.5 0v60" stroke="#f3ead8" stroke-width="2.6"/><path d="M31.5 0v12" stroke="#d47a3a" stroke-width="1"/><path d="M31.5 25v35" stroke="#f2d39a" stroke-width="2.6"/>
<path d="M42 8v52" stroke="#efede9" stroke-width="2.6"/><path d="M42 25v35" stroke="#f0d8c0" stroke-width="2.6"/>
<path d="M52.5 4v56" stroke="#e6e8ec" stroke-width="2.8"/><path d="M52.5 1v8" stroke="#2a2a2a" stroke-width="2"/><path d="M52.5 25v35" stroke="#9cc0e8" stroke-width="2.8"/>
</g>
<path d="M69.6 8.6l7-4.6 8.6 22.4c1 3-1 4.6-3.4 4.6-1.8 0-3.2-.8-4-2.4z" fill="#8cc4e4"/>
<path d="M76 5.2l6.4-4.4" stroke="#4a2a2a" stroke-width="2"/>
<path d="M66 36c4-2 9-1 11 2l-3 4c-3-1-6-1-8-2z" fill="#f0b8c0"/>
</svg>
<div class="t" style="left:306.0px;top:1081.50px;font-size:22.5px;line-height:30px;color:#262a30;letter-spacing:0.904px;-webkit-text-stroke:0.4px #262a30;">Modelones Nail Art Brus...</div>
<div class="b" style="left:605.5px;top:1078.5px;width:22px;height:22.5px;border:1px solid #d3d7e0;border-radius:3px;background:#eef1fb;"></div>
<svg style="left:605.5px;top:1078.5px" width="22" height="22" viewBox="0 0 22 22">
<g stroke="#50555e" stroke-width="1.55" fill="none">
<path d="M2.3 5.3h8.8M6.7 2.9v2.4"/>
<path d="M3.9 5.3c1.2 3.4 3.6 5.2 7.2 6M9.5 5.3c-1.2 3.4-3.6 5.2-7.2 6"/>
<path d="M13 3.9h1.7c1.9 0 3 1.1 3 3v0.9"/>
<path d="M3.8 13.3v0.9c0 1.9 1.1 3 3 3h2.3"/>
<path d="M11.2 18.4l4.1-9.2 4.1 9.2M12.6 15.3h5.4"/>
</g></svg>
<div class="t" style="left:307px;top:1111.50px;font-size:16px;line-height:30px;color:#606266;letter-spacing:-0.150px;">当前ASIN: B085XXXXXX</div>
<div class="t" style="left:2193px;top:1118.50px;font-size:17.5px;line-height:30px;color:#606266;letter-spacing:1.300px;">2019/07/25</div>
<div class="t" style="left:1286px;width:400px;text-align:center;top:1100.5px;font-size:17.5px;line-height:30px;letter-spacing:0.5px;color:#606266;">评分: <b style="color:#50545c">4.4</b><span style="font-size:19px;margin:0 3px 0 4px">/</span>5</div>
<svg style="left:1423.5px;top:1136.0px" width="17" height="16" viewBox="0 0 17 16">
<defs><clipPath id="c3_0"><rect x="0" y="0" width="17" height="16"/></clipPath></defs>
<path d="M8.5 0.2L10.97 5.6L16.9 6.25L12.49 10.25L13.73 16L8.5 13.1L3.27 16L4.51 10.25L0.1 6.25L6.03 5.6Z" fill="#e3e7f1"/>
<path d="M8.5 0.2L10.97 5.6L16.9 6.25L12.49 10.25L13.73 16L8.5 13.1L3.27 16L4.51 10.25L0.1 6.25L6.03 5.6Z" fill="#f7d317" clip-path="url(#c3_0)"/></svg>
<svg style="left:1451.0px;top:1136.0px" width="17" height="16" viewBox="0 0 17 16">
<defs><clipPath id="c3_1"><rect x="0" y="0" width="17" height="16"/></clipPath></defs>
<path d="M8.5 0.2L10.97 5.6L16.9 6.25L12.49 10.25L13.73 16L8.5 13.1L3.27 16L4.51 10.25L0.1 6.25L6.03 5.6Z" fill="#e3e7f1"/>
<path d="M8.5 0.2L10.97 5.6L16.9 6.25L12.49 10.25L13.73 16L8.5 13.1L3.27 16L4.51 10.25L0.1 6.25L6.03 5.6Z" fill="#f7d317" clip-path="url(#c3_1)"/></svg>
<svg style="left:1478.5px;top:1136.0px" width="17" height="16" viewBox="0 0 17 16">
<defs><clipPath id="c3_2"><rect x="0" y="0" width="17" height="16"/></clipPath></defs>
<path d="M8.5 0.2L10.97 5.6L16.9 6.25L12.49 10.25L13.73 16L8.5 13.1L3.27 16L4.51 10.25L0.1 6.25L6.03 5.6Z" fill="#e3e7f1"/>
<path d="M8.5 0.2L10.97 5.6L16.9 6.25L12.49 10.25L13.73 16L8.5 13.1L3.27 16L4.51 10.25L0.1 6.25L6.03 5.6Z" fill="#f7d317" clip-path="url(#c3_2)"/></svg>
<svg style="left:1506.0px;top:1136.0px" width="17" height="16" viewBox="0 0 17 16">
<defs><clipPath id="c3_3"><rect x="0" y="0" width="17" height="16"/></clipPath></defs>
<path d="M8.5 0.2L10.97 5.6L16.9 6.25L12.49 10.25L13.73 16L8.5 13.1L3.27 16L4.51 10.25L0.1 6.25L6.03 5.6Z" fill="#e3e7f1"/>
<path d="M8.5 0.2L10.97 5.6L16.9 6.25L12.49 10.25L13.73 16L8.5 13.1L3.27 16L4.51 10.25L0.1 6.25L6.03 5.6Z" fill="#f7d317" clip-path="url(#c3_3)"/></svg>
<svg style="left:1533.5px;top:1136.0px" width="17" height="16" viewBox="0 0 17 16">
<defs><clipPath id="c3_4"><rect x="0" y="0" width="8.5" height="16"/></clipPath></defs>
<path d="M8.5 0.2L10.97 5.6L16.9 6.25L12.49 10.25L13.73 16L8.5 13.1L3.27 16L4.51 10.25L0.1 6.25L6.03 5.6Z" fill="#e3e7f1"/>
<path d="M8.5 0.2L10.97 5.6L16.9 6.25L12.49 10.25L13.73 16L8.5 13.1L3.27 16L4.51 10.25L0.1 6.25L6.03 5.6Z" fill="#f7d317" clip-path="url(#c3_4)"/></svg>
<div class="b" style="left:2366px;top:1112.5px;width:40px;height:40px;background:#3e6efc;border-radius:5px;"></div>
<svg style="left:2366px;top:1112.5px" width="40" height="40" viewBox="0 0 40 40">
<path d="M27.6 31.2V27.4C28.6 25 31.6 22.4 31.6 17.6C31.6 12.2 26.8 8.4 20.8 8.4C15 8.4 11.8 12.2 11.4 16.4L11.2 19.4L8 22.2L11.4 24.2V30.8H17.8" stroke="#fff" stroke-width="1.6" fill="none" stroke-linejoin="round"/>
<path d="M15.4 23.4L18.1 14.6h0.4L21.2 23.4M16.3 20.6h4M24.7 14.6v8.8" stroke="#fff" stroke-width="1.6" fill="none"/>
</svg>
<div class="b" style="left:2416px;top:1112.5px;width:40px;height:40px;border:1px solid #d6d9e1;border-radius:5px;background:#fff;"></div>
<svg style="left:2416px;top:1112.5px" width="40" height="40" viewBox="0 0 40 40">
<path d="M19 10L21.94 15.9L28.4 16.8L23.7 21.35L24.8 27.8L19 24.8L13.2 27.8L14.3 21.35L9.6 16.8L16.06 15.9Z" stroke="#9a9da5" stroke-width="1.8" fill="none" stroke-linejoin="round"/>
</svg>
<div class="b" style="left:2531px;top:0px;width:14px;height:1122px;background:#f1eff1;"></div>
<div class="b" style="left:2533px;top:0px;width:12px;height:852px;background:#c1c1c1;"></div>
<svg style="left:1001px;top:145.5px" width="14" height="22" viewBox="0 0 14 22">
<path d="M1 1v15.6l3.6-3.4 2.8 6.2c.3.7 1 .9 1.6.6l.6-.3c.6-.3.8-1 .5-1.6L7.4 12.1h4.9z" fill="#fff" stroke="#111" stroke-width="1.1" stroke-linejoin="round"/>
</svg>
</body></html>
